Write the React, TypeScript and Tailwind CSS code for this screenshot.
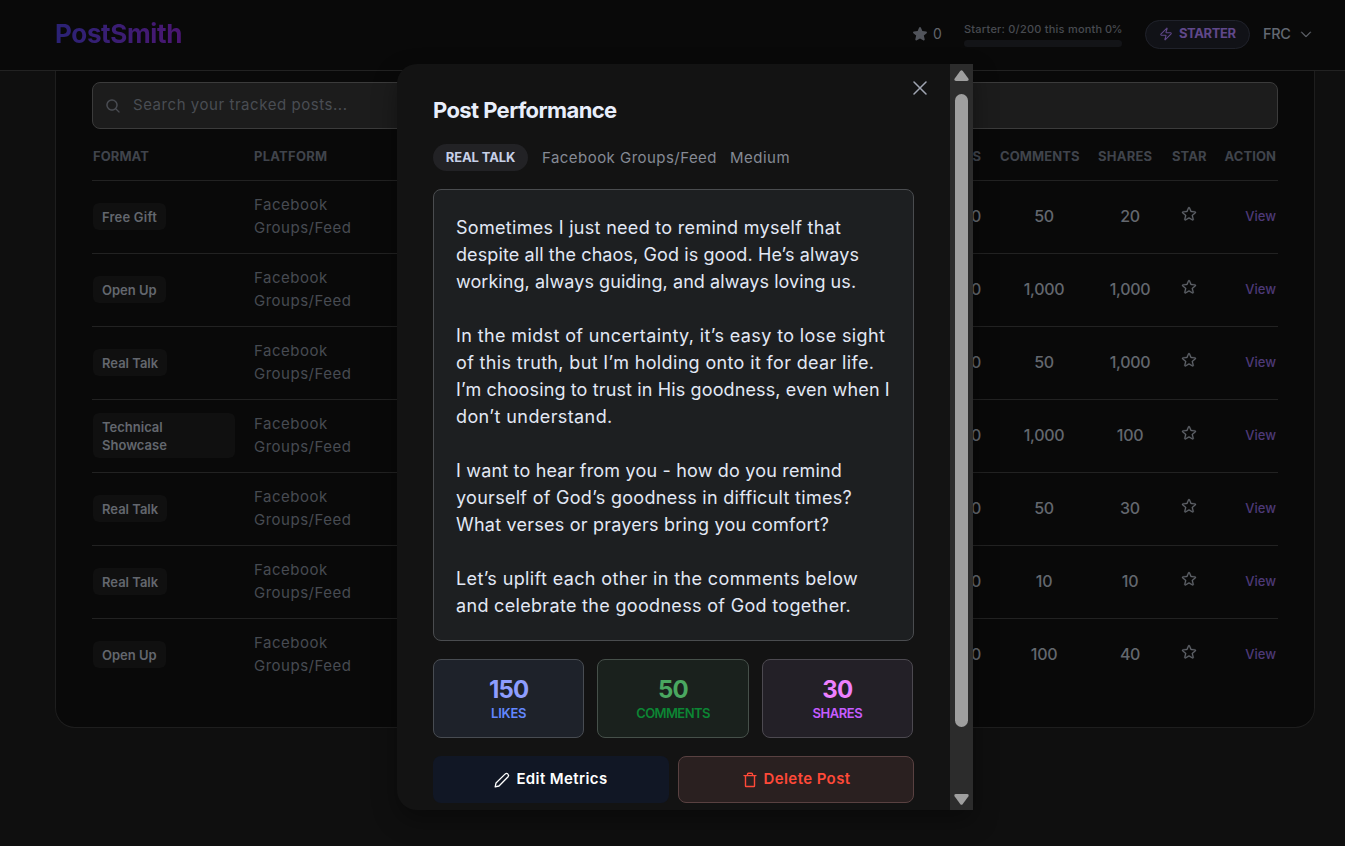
import { clsx } from "clsx";
import { Zap } from "lucide-react";
import { PiCaretDown, PiMagnifyingGlass, PiStar, PiStarFill } from "react-icons/pi";

interface TrackedPost {
  id: number;
  format: string[];
  likes: string;
  comments: string;
  shares: string;
}

const posts: TrackedPost[] = [
  { id: 1, format: ["Free Gift"], likes: "100", comments: "50", shares: "20" },
  { id: 2, format: ["Open Up"], likes: "1,000", comments: "1,000", shares: "1,000" },
  { id: 3, format: ["Real Talk"], likes: "500", comments: "50", shares: "1,000" },
  { id: 4, format: ["Technical", "Showcase"], likes: "1,000", comments: "1,000", shares: "100" },
  { id: 5, format: ["Real Talk"], likes: "150", comments: "50", shares: "30" },
  { id: 6, format: ["Real Talk"], likes: "100", comments: "10", shares: "10" },
  { id: 7, format: ["Open Up"], likes: "200", comments: "100", shares: "40" },
];

interface Line {
  text: string;
  tracking: string;
}

const paragraphs: Line[][] = [
  [
    { text: "Sometimes I just need to remind myself that", tracking: "tracking-[0.3px]" },
    { text: "despite all the chaos, God is good. He’s always", tracking: "tracking-[0.1px]" },
    { text: "working, always guiding, and always loving us.", tracking: "tracking-[0.06px]" },
  ],
  [
    { text: "In the midst of uncertainty, it’s easy to lose sight", tracking: "tracking-[0.38px]" },
    { text: "of this truth, but I’m holding onto it for dear life.", tracking: "tracking-[0.35px]" },
    { text: "I’m choosing to trust in His goodness, even when I", tracking: "tracking-[0.13px]" },
    { text: "don’t understand.", tracking: "tracking-[0.39px]" },
  ],
  [
    { text: "I want to hear from you - how do you remind", tracking: "tracking-[0.18px]" },
    { text: "yourself of God’s goodness in difficult times?", tracking: "tracking-[0.29px]" },
    { text: "What verses or prayers bring you comfort?", tracking: "tracking-[0.22px]" },
  ],
  [
    { text: "Let’s uplift each other in the comments below", tracking: "tracking-[0.37px]" },
    { text: "and celebrate the goodness of God together.", tracking: "tracking-[0.32px]" },
  ],
];

const metrics = [
  { label: "LIKES", value: "150", box: "bg-[#1e222a] border-[#484c52]", num: "text-[#8e9dff]", text: "text-[#6387ff] tracking-[-0.25px]" },
  { label: "COMMENTS", value: "50", box: "bg-[#1a211d] border-[#46504a]", num: "text-[#4aa760]", text: "text-[#0c8634] tracking-[-0.6px]" },
  { label: "SHARES", value: "30", box: "bg-[#232027] border-[#4c4950]", num: "text-[#ed80ff]", text: "text-[#c65cff] tracking-[-0.45px]" },
];

const columns = "grid grid-cols-[162px_1fr_80px_126px_58px_53px_60px]";

function PencilIcon() {
  return (
    <svg viewBox="0 0 16 16" className="size-4" fill="none" stroke="currentColor" strokeWidth="1.3" strokeLinejoin="round">
      <path d="M1.2 14.8 2 11 11.3 1.9a2 2 0 0 1 2.8 2.8L5 14Z" />
    </svg>
  );
}

function TrashIcon() {
  return (
    <svg viewBox="0 0 16 16" className="size-4" fill="none" stroke="currentColor" strokeWidth="1.4" strokeLinejoin="round" strokeLinecap="round">
      <path d="M2 3.6h12M3.5 3.6v10.3a.6.6 0 0 0 .6.6h7.8a.6.6 0 0 0 .6-.6V3.6M5.5 3.6V2.2a.9.9 0 0 1 .9-.9h3.2a.9.9 0 0 1 .9.9v1.4" />
    </svg>
  );
}

function Header() {
  return (
    <header className="flex h-[71px] items-center justify-between border-b border-[#222] bg-[#090909] pr-8 pl-[55px]">
      <h1 className="mt-[-3px] bg-gradient-to-r from-[#2a2275] to-[#4a1672] bg-clip-text text-[26px] leading-8 font-bold tracking-[-0.35px] text-transparent">
        PostSmith
      </h1>
      <div className="mt-[-2px] flex items-center text-[#61646b]">
        <PiStarFill className="size-4 text-[#50535a]" />
        <span className="ml-[5px] w-[9px] text-sm">0</span>
        <div className="mt-px ml-[22px] w-[158px]">
          <div className="flex justify-between text-[11px] leading-[13px] font-medium whitespace-nowrap text-[#484b51]">
            <span className="tracking-[0.23px]">Starter: 0/200 this month</span>
            <span className="tracking-[-0.5px]">0%</span>
          </div>
          <div className="mt-1 h-[7px] rounded-full bg-[#131417]" />
        </div>
        <div className="ml-[23px] flex h-[29px] w-[105px] items-center rounded-full border border-[#20222b] bg-[#111217] pl-[13px] text-[#60488a]">
          <Zap className="size-[14px]" strokeWidth={1.8} />
          <span className="ml-[6px] text-[13px] font-bold tracking-[-0.4px]">STARTER</span>
        </div>
        <span className="ml-[13px] w-[29px] text-[14.5px] font-medium tracking-[-0.3px] text-[#626872]">FRC</span>
        <PiCaretDown className="ml-[7px] size-[14px] stroke-current [stroke-width:8]" />
      </div>
    </header>
  );
}

function PostRow({ post, last }: { post: TrackedPost; last: boolean }) {
  return (
    <div
      className={clsx(
        columns,
        "items-center pb-px text-base text-[#63676e]",
        last ? "h-[72px]" : "h-[73px] border-b border-[#222]"
      )}
    >
      <div className="pl-px">
        <div
          className={clsx(
            "rounded-md bg-[#101010] px-[9px] py-[4.5px] text-[13px] leading-[18px] font-semibold",
            post.format.length > 1 ? "w-[142px]" : "w-fit",
            post.format[0] === "Free Gift" && "tracking-[0.2px]"
          )}
        >
          {post.format.map((line) => (
            <div key={line}>{line}</div>
          ))}
        </div>
      </div>
      <div className="mt-[-1px] text-[15px] leading-[23px] tracking-[0.5px] text-[#474b52]">
        Facebook
        <br />
        Groups/Feed
      </div>
      <div className="mt-[-2px] text-right font-medium tracking-[-0.3px]">{post.likes}</div>
      <div className="mt-[-2px] text-center font-medium tracking-[-0.3px]">{post.comments}</div>
      <div className="mt-[-2px] ml-[-11px] w-[68px] text-center font-medium tracking-[-0.3px]">{post.shares}</div>
      <PiStar className="mt-[-5px] ml-4 size-4 stroke-current [stroke-width:5]" />
      <div className="pt-px pr-0.5 text-right text-[13px] font-medium text-[#4d3977]">View</div>
    </div>
  );
}

function PostsCard() {
  return (
    <main className="ml-[55px] w-[1260px] rounded-b-[20px] border border-t-0 border-[#1e1e1e] bg-[#090909] px-9 pt-[11px] pb-9">
      <div className="flex h-[47px] items-center rounded-lg border border-[#3b3b3b] bg-[#1c1c1c] pl-3">
        <PiMagnifyingGlass className="size-4 stroke-current text-[#50535a] [stroke-width:5]" />
        <span className="ml-3 text-[15px] tracking-[0.55px] text-[#494d53]">Search your tracked posts...</span>
      </div>
      <div className={clsx(columns, "h-[52px] items-center border-b border-[#222] pt-[5px] text-[13px] font-bold tracking-[0.08px] text-[#40444c]")}>
        <span className="pl-px">FORMAT</span>
        <span className="tracking-[0.25px]">PLATFORM</span>
        <span className="text-right">LIKES</span>
        <span className="pl-[19px]">COMMENTS</span>
        <span className="ml-[-9px] tracking-[0.25px]">SHARES</span>
        <span className="pl-[7px]">STAR</span>
        <span className="pr-0.5 text-right">ACTION</span>
      </div>
      {posts.map((post, i) => (
        <PostRow key={post.id} post={post} last={i === posts.length - 1} />
      ))}
    </main>
  );
}

function ModalScrollbar() {
  return (
    <div className="flex w-[23px] flex-col items-center bg-[#2c2c2c] text-[#9f9f9f]">
      <svg viewBox="0 0 15 11" className="mt-[6px] h-[11px] w-[15px]" fill="currentColor">
        <path d="M6.2 1Q7.5-.7 8.8 1L14.3 8.5Q15.5 11 13 11H2Q-.5 11 .7 8.5Z" />
      </svg>
      <div className="mt-[13px] h-[633px] w-[13px] rounded-full bg-[#9f9f9f]" />
      <svg viewBox="0 0 15 11" className="mt-[67px] h-[11px] w-[15px] rotate-180" fill="currentColor">
        <path d="M6.2 1Q7.5-.7 8.8 1L14.3 8.5Q15.5 11 13 11H2Q-.5 11 .7 8.5Z" />
      </svg>
    </div>
  );
}

function PostPerformanceModal() {
  return (
    <div className="absolute top-16 left-[397px] flex h-[746px] w-[576px] overflow-hidden rounded-l-[20px] bg-[#131313] shadow-[0_10px_25px_rgba(0,0,0,0.35)]">
      <div className="relative flex-1 px-9 pt-[30px]">
        <svg
          viewBox="0 0 14 14"
          className="absolute top-[17px] right-[23px] size-[14px] text-[#a0a5b2]"
          stroke="currentColor"
          strokeWidth="1.5"
          strokeLinecap="round"
        >
          <path d="m1 1 12 12M13 1 1 13" />
        </svg>
        <h2 className="text-[22px] leading-8 font-bold tracking-[-0.6px] whitespace-nowrap text-[#e8eefb]">Post Performance</h2>
        <div className="mt-[17px] flex h-7 items-center whitespace-nowrap text-[#858a95]">
          <span className="flex h-[27px] w-[95px] items-center justify-center rounded-full bg-[#222225] pt-px text-[13px] font-bold tracking-[-0.1px] text-[#c7d0e8]">
            REAL TALK
          </span>
          <span className="ml-[14px] w-[175px] pt-0.5 text-[15px] tracking-[0.46px]">Facebook Groups/Feed</span>
          <span className="ml-[13px] pt-0.5 text-[15px] tracking-[0.5px]">Medium</span>
        </div>
        <div className="mt-[18px] h-[452px] w-[481px] rounded-lg border border-[#4a4c4f] bg-[#1d1f21] px-[22px] pt-6 text-lg leading-[27px] whitespace-nowrap text-[#e2e8f5]">
          {paragraphs.map((lines) => (
            <div key={lines[0].text} className="mb-[27px]">
              {lines.map((line) => (
                <p key={line.text} className={line.tracking}>
                  {line.text}
                </p>
              ))}
            </div>
          ))}
        </div>
        <div className="mt-[18px] flex w-[480px] gap-[13px]">
          {metrics.map((m) => (
            <div key={m.label} className={clsx("h-[79px] flex-1 rounded-lg border pt-4 text-center", m.box)}>
              <div className={clsx("text-2xl leading-7 font-bold tracking-[-0.8px]", m.num)}>{m.value}</div>
              <div className={clsx("text-[13px] leading-[18px] font-semibold", m.text)}>{m.label}</div>
            </div>
          ))}
        </div>
        <div className="mt-[18px] flex gap-[9px] text-[15px] font-semibold whitespace-nowrap">
          <button className="flex h-[47px] w-[236px] shrink-0 items-center justify-center gap-[6px] rounded-lg bg-[#111725] tracking-[0.4px] text-white">
            <PencilIcon />
            Edit Metrics
          </button>
          <button className="flex h-[47px] w-[236px] shrink-0 items-center justify-center gap-[6px] rounded-lg border border-[#594141] bg-[#2a2020] tracking-[0.4px] text-[#ff4938]">
            <TrashIcon />
            Delete Post
          </button>
        </div>
      </div>
      <ModalScrollbar />
    </div>
  );
}

export default function App() {
  return (
    <div className="relative h-[846px] w-[1345px] overflow-hidden bg-[#0f0f0f] font-[Inter,sans-serif]">
      <Header />
      <PostsCard />
      <PostPerformanceModal />
    </div>
  );
}
